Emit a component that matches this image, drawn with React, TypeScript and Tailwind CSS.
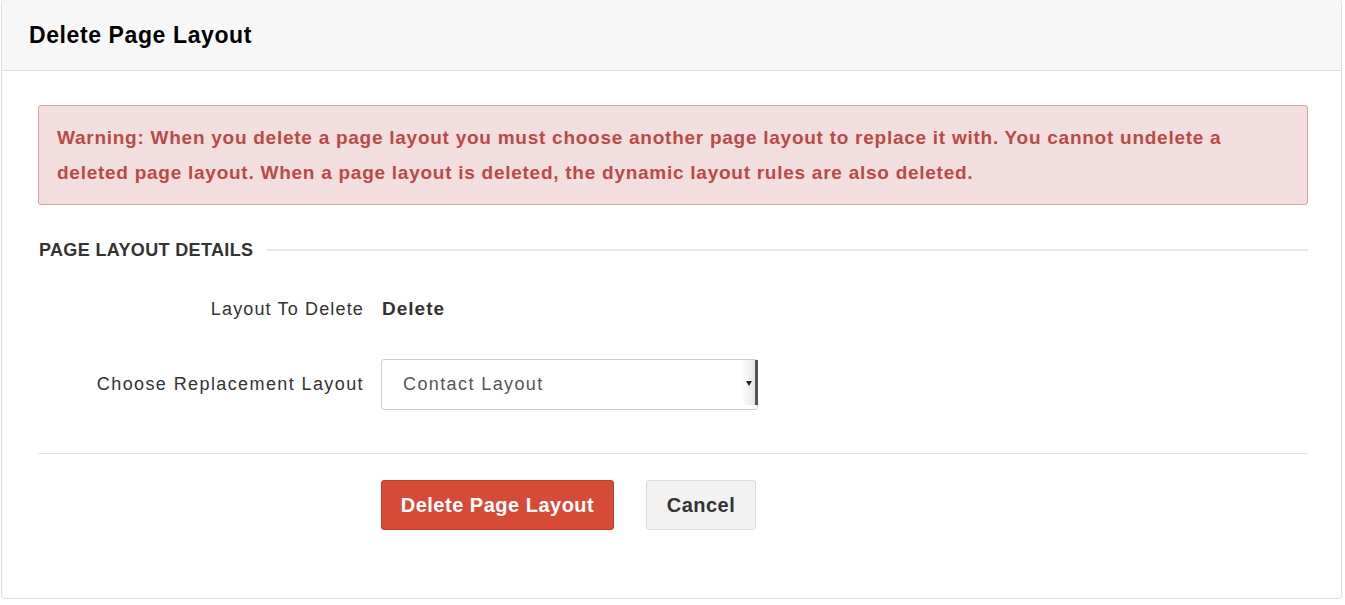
import { useState } from "react";

const layouts = ["Contact Layout", "Account Layout", "Lead Layout"];

export default function App() {
    const [replacement, setReplacement] = useState(layouts[0]);

    return (
        <div className="min-h-screen bg-white pl-px pr-[3px] font-['Liberation_Sans',Arial,sans-serif] text-[#333]">
            <div className="-mt-px h-[600px] rounded-[4px] border border-[#dedede] bg-white">
                <div className="flex h-[71px] items-center rounded-t-[4px] border-b border-[#dedede] bg-[#f7f7f7] px-[27px]">
                    <h1 className="text-[23px] font-bold tracking-[0.6px] text-black">Delete Page Layout</h1>
                </div>

                <div className="pl-[36px] pr-[33px] pt-[34px]">
                    <div className="rounded-[3px] border border-[#dca3a3] bg-[#f2dede] px-[18px] py-[14px] text-[19px] font-bold leading-[35px] tracking-[0.74px] text-[#b94a48]">
                        Warning: When you delete a page layout you must choose another page layout to replace it with. You cannot undelete a
                        <br />
                        deleted page layout. When a page layout is deleted, the dynamic layout rules are also deleted.
                    </div>

                    <div className="mt-[36px] flex items-center">
                        <h2 className="pl-px text-[18px] font-bold uppercase leading-none tracking-[0.35px] text-[#333]">Page Layout Details</h2>
                        <div className="ml-[14px] h-[2px] flex-1 bg-[#e8e8e8]" />
                    </div>

                    <div className="mt-[36px] flex items-center">
                        <div className="w-[326px] text-right text-[18px] tracking-[1.15px] text-[#333]">Layout To Delete</div>
                        <div className="ml-[18px] text-[19px] font-bold tracking-[1px] text-[#333]">Delete</div>
                    </div>

                    <div className="mt-[35px] flex items-center">
                        <div className="w-[326px] text-right text-[18px] tracking-[1.4px] text-[#333]">Choose Replacement Layout</div>
                        <div className="relative ml-[17px] h-[51px] w-[377px]">
                            <select
                                value={replacement}
                                onChange={(e) => setReplacement(e.target.value)}
                                className="h-full w-full appearance-none rounded-[3px] border border-[#cccccc] bg-white pl-[21px] text-[18px] tracking-[1.4px] text-[#555] outline-none"
                            >
                                {layouts.map((l) => (
                                    <option key={l}>{l}</option>
                                ))}
                            </select>
                            {/* native-style dropdown arrow strip */}
                            <div className="pointer-events-none absolute right-0 top-px bottom-[5px] flex w-[16px] items-center justify-center border-r-[3px] border-[#555] bg-gradient-to-r from-white to-[#e6e6e6]">
                                <span className="mt-[2px] block h-0 w-0 border-x-[3px] border-t-[5px] border-x-transparent border-t-[#222]" />
                            </div>
                        </div>
                    </div>

                    <div className="mt-[43px] h-px bg-[#e3e3e3]" />

                    <div className="mt-[26px] flex items-center pl-[343px]">
                        <button className="h-[50px] w-[233px] rounded-[3px] border border-[#c43d2c] bg-[#d84a38] text-[20px] font-bold tracking-[0.5px] text-white">
                            Delete Page Layout
                        </button>
                        <button className="ml-[32px] h-[50px] w-[110px] rounded-[3px] border border-[#dcdcdc] bg-[#f2f2f2] text-[20px] font-bold tracking-[0.5px] text-[#333]">
                            Cancel
                        </button>
                    </div>
                </div>
            </div>
        </div>
    );
}
